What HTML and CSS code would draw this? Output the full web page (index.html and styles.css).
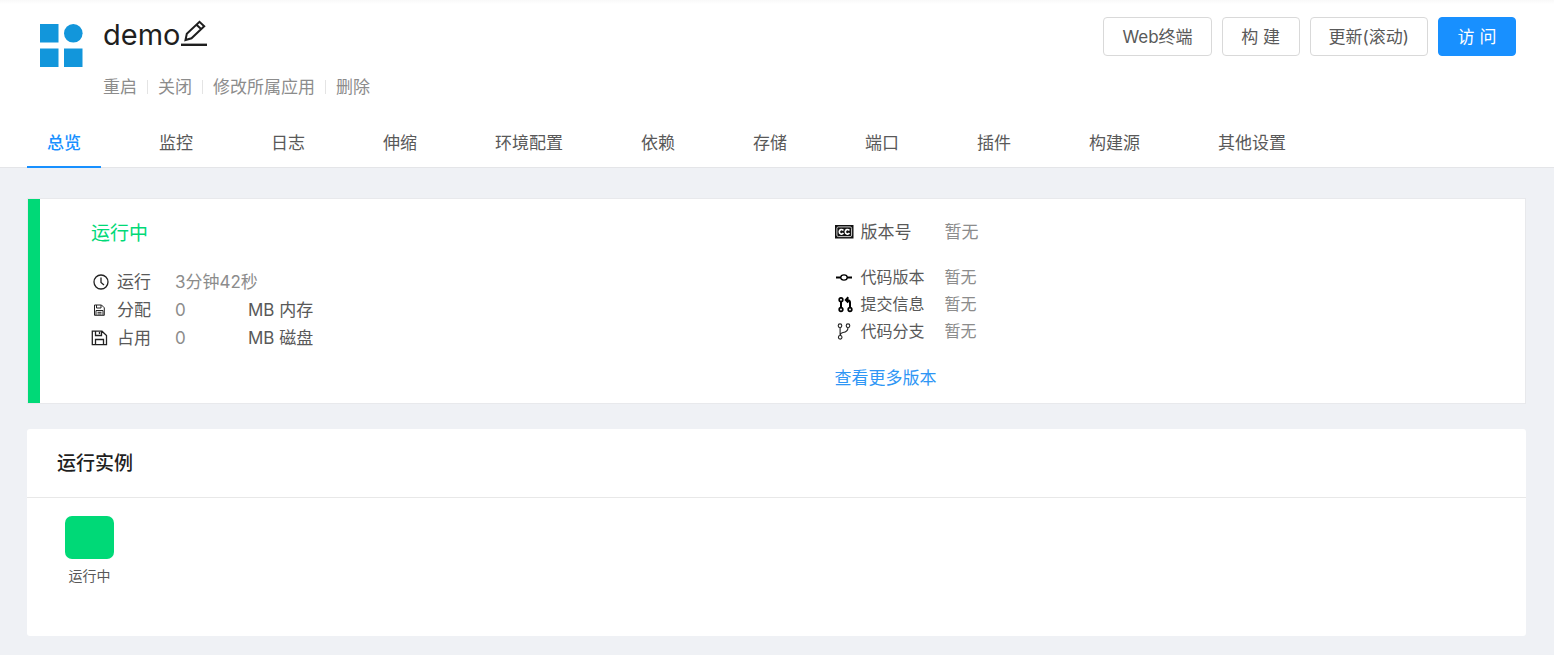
FILE: index.html
```html
<!DOCTYPE html>
<html lang="zh-CN">
<head>
<meta charset="utf-8">
<meta name="viewport" content="width=device-width, initial-scale=1">
<title>demo</title>
<link rel="stylesheet" href="styles.css">
</head>
<body>
<header class="page-header">
  <div class="header-top">
    <svg class="logo" viewBox="0 0 44 44" aria-hidden="true">
      <path d="M0 0h18.500v18.500H0zM0 24.500h18.500v18.500H0zM24 24.500h18.500v18.500H24z"/>
      <circle cx="33.300" cy="9.300" r="9.300"/>
    </svg>
    <div class="heading">
      <div class="title-row">
        <h1 class="title">demo</h1>
        <button class="edit" type="button" aria-label="编辑">
          <svg viewBox="0 0 28 28" aria-hidden="true">
            <path d="M1 23.800h26" stroke-width="2.400"/>
            <path d="M5.500 19l1.300-6.300L19.500 .8l4.700 4.400L11.500 17.300zM16.500 3.800l4.600 4.300" stroke-width="2"/>
          </svg>
        </button>
      </div>
      <nav class="actions">
        <a href="#">重启</a>
        <a href="#">关闭</a>
        <a href="#">修改所属应用</a>
        <a href="#">删除</a>
      </nav>
    </div>
    <div class="buttons">
      <button class="btn" type="button">Web终端</button>
      <button class="btn" type="button">构 建</button>
      <button class="btn" type="button">更新(滚动)</button>
      <button class="btn primary" type="button">访 问</button>
    </div>
  </div>
  <nav class="tabs">
    <a class="tab active" href="#">总览</a>
    <a class="tab" href="#">监控</a>
    <a class="tab" href="#">日志</a>
    <a class="tab" href="#">伸缩</a>
    <a class="tab" href="#">环境配置</a>
    <a class="tab" href="#">依赖</a>
    <a class="tab" href="#">存储</a>
    <a class="tab" href="#">端口</a>
    <a class="tab" href="#">插件</a>
    <a class="tab" href="#">构建源</a>
    <a class="tab" href="#">其他设置</a>
  </nav>
</header>
<main class="content">
  <section class="status-card">
    <div class="running">
      <h2 class="status">运行中</h2>
      <div class="metrics">
        <svg class="icon" viewBox="0 0 18 18" aria-hidden="true"><circle cx="10" cy="9" r="7"/><path d="M10 4.500V9.500l3 2.500"/></svg>
        <span>运行</span>
        <span class="muted wide">3分钟42秒</span>
        <svg class="icon small" viewBox="0 0 18 18" aria-hidden="true"><path d="M3.500 4h7l2.800 2.800v7.500h-9.800zM5.500 4v3h4.500V4M5 9.500h7M5 14V9.500M12 14V9.500M6.500 11.300h4M6.500 13h4"/></svg>
        <span>分配</span>
        <span class="muted">0</span>
        <span>MB 内存</span>
        <svg class="icon" viewBox="0 0 18 18" aria-hidden="true"><path d="M1.300 2.200h9.700L15.500 6.500v9.200H1.300zM4.500 2.200v4.300h6V2.200M8.500 3v2M4.500 15.700v-5.200h8v5.200"/></svg>
        <span>占用</span>
        <span class="muted">0</span>
        <span>MB 磁盘</span>
      </div>
    </div>
    <div class="source">
      <div class="version">
        <svg class="cc" viewBox="0 0 18 18" aria-hidden="true"><path class="cc-box" d="M0 2h18.500v13.500H0z"/><rect class="cc-line" x="1.900" y="3.900" width="14.700" height="9.700" rx="1.500"/><path class="cc-line bold" d="M8.400 7.500C7 5.700 4.300 6.500 4.300 8.800S7 11.900 8.400 10.100M14.400 7.500c-1.400-1.800-4.100-1-4.100 1.300s2.700 3.100 4.100 1.300"/></svg>
        <span>版本号</span>
        <span class="muted">暂无</span>
      </div>
      <div class="version code">
        <svg class="icon heavy" viewBox="0 0 18 18" aria-hidden="true"><path d="M1 8.500h5M12 8.500h5"/><ellipse class="thin" cx="9" cy="8.500" rx="3.200" ry="2.600"/></svg>
        <span>代码版本</span>
        <span class="muted">暂无</span>
        <svg class="icon heavy" viewBox="0 0 18 18" aria-hidden="true"><path d="M6 5.500v6M15 11.500V6.500c0-1.800-1-2.500-3-2.500M13.300 1.300L10.800 4l2.500 2.500"/><g class="mid"><circle cx="6" cy="3.700" r="1.800"/><circle cx="6" cy="13.500" r="1.800"/><circle cx="15" cy="13.500" r="1.800"/></g></svg>
        <span>提交信息</span>
        <span class="muted">暂无</span>
        <svg class="icon branch" viewBox="0 0 18 18" aria-hidden="true"><circle cx="5" cy="2.700" r="1.800"/><circle cx="5.200" cy="14.300" r="1.800"/><circle cx="13" cy="2.700" r="1.800"/><path d="M5.100 4.500v8M13 4.500c0 4-2.500 4.700-5 5-1.500.3-2.700 1-2.800 3"/></svg>
        <span>代码分支</span>
        <span class="muted">暂无</span>
      </div>
      <a class="more" href="#">查看更多版本</a>
    </div>
  </section>
  <section class="instances">
    <h2 class="card-title">运行实例</h2>
    <div class="instance-list">
      <div class="instance">
        <div class="block"></div>
        <span>运行中</span>
      </div>
    </div>
  </section>
</main>
</body>
</html>
```

FILE: styles.css
```css
* { box-sizing: border-box; }

body {
  margin: 0;
  min-height: 100vh;
  background: #eff1f5;
  color: #595959;
  font: 17px/28px Inter, "Noto Sans CJK SC", sans-serif;
}

h1, h2 { margin: 0; }
a { color: inherit; text-decoration: none; }
button { font: inherit; color: inherit; cursor: pointer; }

.page-header {
  background: linear-gradient(#f9f9f9, #fff 4px);
  border-bottom: 1px solid #e4e5e8;
}

.header-top {
  display: flex;
  align-items: flex-start;
  padding: 17px 38px 0 40px;
}

.logo {
  width: 44px;
  height: 44px;
  margin: 7px 19px 0 0;
  fill: #1296db;
}

.heading { flex: 1; }

.title-row {
  display: flex;
  align-items: center;
  height: 36px;
}

.title {
  color: #1f1f1f;
  font-size: 29px;
  font-weight: 400;
  line-height: 36px;
}

.edit {
  width: 28px;
  height: 28px;
  padding: 0;
  border: 0;
  background: none;
}

.edit svg {
  display: block;
  overflow: visible;
  fill: none;
  stroke: #1f1f1f;
}

.actions {
  display: flex;
  align-items: center;
  margin-top: 20px;
  color: #8c8c8c;
}

.actions a + a {
  display: flex;
  align-items: center;
}

.actions a + a::before {
  content: "";
  height: 14px;
  margin: 0 10px;
  border-left: 1px solid #e4e4e4;
}

.buttons {
  display: flex;
  gap: 10px;
}

.btn {
  min-width: 78px;
  height: 39px;
  padding: 0 18px;
  border: 1px solid #d9d9d9;
  border-radius: 4px;
  background: #fff;
}

.btn.primary {
  border-color: #1890ff;
  background: #1890ff;
  color: #fff;
}

.tabs {
  display: flex;
  gap: 38px;
  margin: 18px 27px -1px;
}

.tab {
  padding: 10px 20px 9px;
  border-bottom: 2px solid transparent;
  white-space: nowrap;
}

.tab.active {
  border-color: #1890ff;
  color: #1890ff;
  font-weight: 500;
}

.content {
  display: grid;
  gap: 25px;
  padding: 30px 28px 19px 27px;
}

.status-card {
  display: grid;
  grid-template-columns: 1fr 1fr;
  border: 1px solid #e8e9ec;
  background: linear-gradient(90deg, #00d977 12px, #fff 12px);
  padding-left: 12px;
}

.running { padding: 21px 20px 11px 51px; }
.source { padding: 19px 20px 11px 52px; }

.status {
  color: #00d977;
  font-size: 19px;
  font-weight: 400;
  line-height: 28px;
}

.metrics {
  display: grid;
  grid-template-columns: 26px 58px 73px auto;
  justify-content: start;
  align-items: center;
  margin-top: 20px;
}

.wide { grid-column: span 2; }
.muted { color: #8c8c8c; }

.icon, .cc {
  width: 18px;
  height: 18px;
  overflow: visible;
}

.icon {
  fill: none;
  stroke: #222;
  stroke-width: 1.3;
}

.small { stroke-width: 1; }
.branch { stroke-width: 1.1; }
.heavy { stroke: #000; stroke-width: 2; }
.thin { stroke-width: 1.3; }
.mid { stroke-width: 1.7; }
.cc-box { fill: #111; }
.cc-line { fill: none; stroke: #fff; stroke-width: 0.8; }
.bold { stroke-width: 1.7; }

.version {
  display: grid;
  grid-template-columns: 26px 84px auto;
  justify-content: start;
  align-items: center;
}

.code {
  margin-top: 18px;
  font-size: 16px;
  line-height: 27px;
}

.more {
  display: inline-block;
  margin-top: 19px;
  color: #2e96f5;
}

.instances {
  min-height: 207px;
  border-radius: 3px;
  background: #fff;
}

.card-title {
  padding: 21px 30px 19px;
  border-bottom: 1px solid #e8e8e8;
  color: #1f1f1f;
  font-size: 19px;
  font-weight: 500;
  line-height: 28px;
}

.instance-list {
  display: flex;
  padding: 18px 38px;
}

.instance {
  display: grid;
  justify-items: center;
  gap: 6px;
  font-size: 14px;
  line-height: 22px;
}

.block {
  width: 49px;
  height: 43px;
  border-radius: 7px;
  background: #00d977;
}
```
